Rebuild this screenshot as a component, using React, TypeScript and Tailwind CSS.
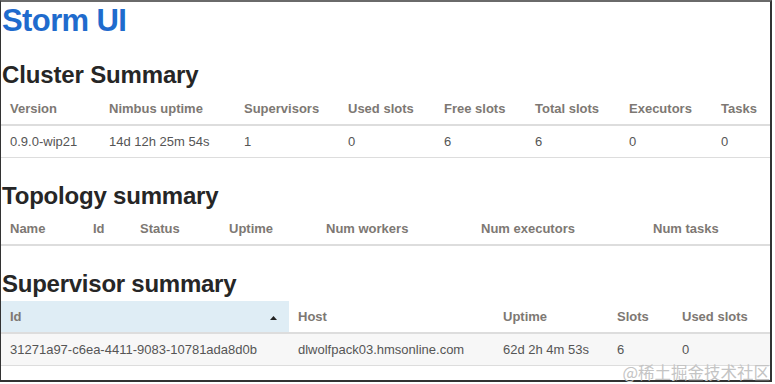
import React from "react";

const font = { fontFamily: '"Liberation Sans", Arial, Helvetica, sans-serif' };

function Th({ children, className = "" }: { children?: React.ReactNode; className?: string }) {
  return (
    <div className={`h-[31px] flex items-center pl-[9px] text-[13px] font-bold text-[#7d7873] whitespace-nowrap ${className}`}>
      {children}
    </div>
  );
}

function Td({ children, className = "" }: { children?: React.ReactNode; className?: string }) {
  return (
    <div className={`h-[31px] flex items-center pl-[9px] text-[13px] text-[#555] whitespace-nowrap ${className}`}>
      {children}
    </div>
  );
}

export default function App() {
  return (
    <div className="w-[775px] h-[384px] bg-white relative overflow-hidden" style={font}>
      <div className="w-[772px] h-[382px] border-l border-r-2 border-b-2 border-t-2 border-l-[#333] border-r-[#333] border-b-[#333] border-t-[#6a6a6a] flex flex-col">
        <h1 className="mt-[1px] pl-[1px] text-[31px] leading-[36px] font-bold text-[#1f6bcd] tracking-[-0.6px]">Storm UI</h1>

        <h2 className="mt-[22px] pl-[1px] text-[24px] leading-[28px] font-bold text-[#262626] tracking-[-0.15px]">Cluster Summary</h2>
        <div className="mt-[4px]">
          <div className="grid grid-cols-[99px_135px_104px_96px_91px_94px_92px_58px] border-b-2 border-[#dddddd]">
            <Th>Version</Th>
            <Th>Nimbus uptime</Th>
            <Th>Supervisors</Th>
            <Th>Used slots</Th>
            <Th>Free slots</Th>
            <Th>Total slots</Th>
            <Th>Executors</Th>
            <Th>Tasks</Th>
          </div>
          <div className="grid grid-cols-[99px_135px_104px_96px_91px_94px_92px_58px] border-b border-[#dddddd]">
            <Td>0.9.0-wip21</Td>
            <Td>14d 12h 25m 54s</Td>
            <Td>1</Td>
            <Td>0</Td>
            <Td>6</Td>
            <Td>6</Td>
            <Td>0</Td>
            <Td>0</Td>
          </div>
        </div>

        <h2 className="mt-[24px] pl-[1px] text-[24px] leading-[28px] font-bold text-[#262626] tracking-[-0.2px]">Topology summary</h2>
        <div className="mt-[3px]">
          <div className="grid grid-cols-[83px_47px_89px_97px_155px_172px_126px] border-b-2 border-[#dddddd]">
            <Th>Name</Th>
            <Th>Id</Th>
            <Th>Status</Th>
            <Th>Uptime</Th>
            <Th>Num workers</Th>
            <Th>Num executors</Th>
            <Th>Num tasks</Th>
          </div>
        </div>

        <h2 className="mt-[24px] pl-[1px] text-[24px] leading-[28px] font-bold text-[#262626] tracking-[-0.25px]">Supervisor summary</h2>
        <div className="mt-[3px]">
          <div className="grid grid-cols-[288px_205px_114px_65px_97px] border-b-2 border-[#dddddd]">
            <Th className="bg-[#dfedf5] justify-between pr-[12px]">
              <span>Id</span>
              <svg width="7" height="4" viewBox="0 0 7 4" className="mt-[3px]">
                <path d="M3.5 0 L7 4 L0 4 Z" fill="#222" />
              </svg>
            </Th>
            <Th>Host</Th>
            <Th>Uptime</Th>
            <Th>Slots</Th>
            <Th>Used slots</Th>
          </div>
          <div className="grid grid-cols-[288px_205px_114px_65px_97px] border-b border-[#dddddd] bg-[#f7f7f7]">
            <Td>31271a97-c6ea-4411-9083-10781ada8d0b</Td>
            <Td>dlwolfpack03.hmsonline.com</Td>
            <Td>62d 2h 4m 53s</Td>
            <Td>6</Td>
            <Td>0</Td>
          </div>
        </div>
      </div>
      <div
        className="absolute right-[5px] bottom-[2px] text-[16.5px] leading-[20px] text-[#c4c4c4]"
        style={{ fontFamily: '"Noto Sans CJK SC", "Liberation Sans", sans-serif' }}
      >
        @稀土掘金技术社区
      </div>
    </div>
  );
}
